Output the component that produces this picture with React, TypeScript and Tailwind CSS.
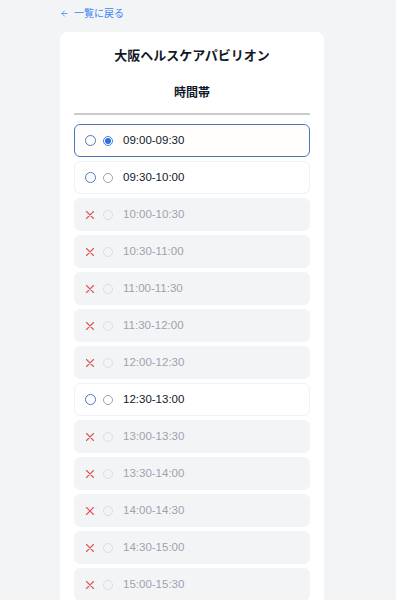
import { ArrowLeft } from 'lucide-react';

type Slot = { label: string; available: boolean };

const slots: Slot[] = [
  { label: '09:00-09:30', available: true },
  { label: '09:30-10:00', available: true },
  { label: '10:00-10:30', available: false },
  { label: '10:30-11:00', available: false },
  { label: '11:00-11:30', available: false },
  { label: '11:30-12:00', available: false },
  { label: '12:00-12:30', available: false },
  { label: '12:30-13:00', available: true },
  { label: '13:00-13:30', available: false },
  { label: '13:30-14:00', available: false },
  { label: '14:00-14:30', available: false },
  { label: '14:30-15:00', available: false },
  { label: '15:00-15:30', available: false },
  { label: '15:30-16:00', available: false },
];

function Cross() {
  return (
    <svg width="10" height="10" viewBox="0 0 10 10" fill="none">
      <path d="M1.5 1.5 L8.5 8.5 M8.5 1.5 L1.5 8.5" stroke="#e05258" strokeWidth="1.1" strokeLinecap="round" />
    </svg>
  );
}

export default function App() {
  const selected = '09:00-09:30';

  return (
    <div
      className="min-h-screen bg-[#f3f4f6] pl-[60px] pr-[72px] pt-[6px] pb-6"
      style={{ fontFamily: '"Liberation Sans", "Noto Sans CJK JP", sans-serif' }}
    >
      {/* Back link */}
      <button className="flex items-center gap-[5px] text-[10px] text-[#3b82f6] h-[14px]">
        <ArrowLeft className="w-[9px] h-[9px]" strokeWidth={2} />
        一覧に戻る
      </button>

      {/* Card */}
      <div className="mt-[12px] bg-white rounded-lg px-[14px] pt-[14px] pb-4">
        <h1 className="text-center text-[13px] font-semibold text-gray-900 leading-[20px]">
          大阪ヘルスケアパビリオン
        </h1>
        <h2 className="mt-[18px] text-center text-[12px] font-semibold text-gray-900 leading-[18px]">
          時間帯
        </h2>
        <div className="mt-[11px] h-[2px] bg-[#c9cbcf]" />

        <div className="mt-[9px] flex flex-col gap-[4px]">
          {slots.map(slot => {
            const isSelected = slot.label === selected;
            let rowClass = 'bg-white border border-[#f1f2f4]';
            if (isSelected) rowClass = 'bg-[#fffefc] border-[1.5px] border-[#4b78b8]';
            else if (!slot.available) rowClass = 'bg-[#f3f4f6] border border-[#f3f4f6]';

            return (
              <div
                key={slot.label}
                className={`h-[33px] rounded-md flex items-center pl-[9px] ${rowClass}`}
              >
                <span className="w-[12px] h-[12px] flex items-center justify-center">
                  {slot.available ? (
                    <span className="w-[11px] h-[11px] rounded-full border-[1.3px] border-[#4f7bb8]" />
                  ) : (
                    <Cross />
                  )}
                </span>
                <span className="ml-[7px] w-[10px] h-[10px] rounded-full flex items-center justify-center">
                  {isSelected ? (
                    <span className="w-[10px] h-[10px] rounded-full border border-[#3b82f6] flex items-center justify-center">
                      <span className="w-[6px] h-[6px] rounded-full bg-[#2f6fd6]" />
                    </span>
                  ) : (
                    <span
                      className={`w-[10px] h-[10px] rounded-full border ${
                        slot.available ? 'border-[#9ca3af]' : 'border-[#dcdee2]'
                      }`}
                    />
                  )}
                </span>
                <span
                  className={`ml-[10px] text-[11.5px] ${
                    slot.available ? 'text-gray-900' : 'text-[#9ca3af]'
                  }`}
                >
                  {slot.label}
                </span>
              </div>
            );
          })}
        </div>
      </div>
    </div>
  );
}
